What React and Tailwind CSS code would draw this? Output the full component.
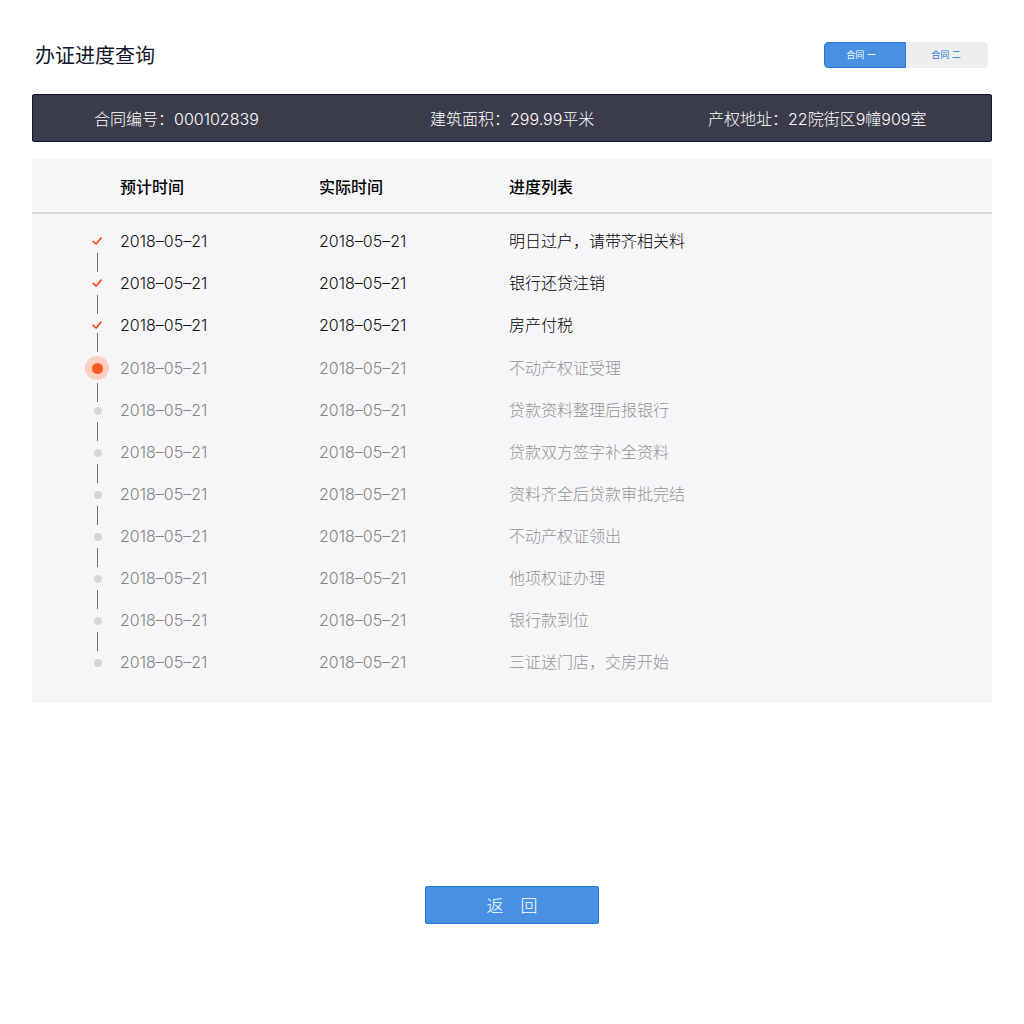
import { useState } from "react";
import clsx from "clsx";

const CONTRACTS = ["合同 一", "合同 二"];

const INFO = [
  { label: "合同编号", value: "000102839" },
  { label: "建筑面积", value: "299.99平米" },
  { label: "产权地址", value: "22院街区9幢909室" },
];

const STEPS = [
  { title: "明日过户，请带齐相关料", status: "done" },
  { title: "银行还贷注销", status: "done" },
  { title: "房产付税", status: "done" },
  { title: "不动产权证受理", status: "current" },
  { title: "贷款资料整理后报银行", status: "pending" },
  { title: "贷款双方签字补全资料", status: "pending" },
  { title: "资料齐全后贷款审批完结", status: "pending" },
  { title: "不动产权证领出", status: "pending" },
  { title: "他项权证办理", status: "pending" },
  { title: "银行款到位", status: "pending" },
  { title: "三证送门店，交房开始", status: "pending" },
].map((step) => ({ planned: "2018–05–21", actual: "2018–05–21", ...step }));

function Marker({ status }) {
  if (status === "done") {
    return (
      <svg viewBox="0 0 10 8" className="h-2 w-2.5" fill="none" stroke="#ff4a14" strokeWidth="1.6">
        <path d="M0.6 3.8 4.2 7 9.4 0.6" />
      </svg>
    );
  }
  if (status === "current") {
    return (
      <span className="flex size-6 items-center justify-center rounded-full bg-[#ffcfc1]">
        <span className="size-[11px] rounded-full bg-[#ff5a1f]" />
      </span>
    );
  }
  return <span className="mt-0.5 ml-px size-2 rounded-full bg-[#d6d6d6]" />;
}

function StepRow({ step, next }) {
  const beforeCurrent = next?.status === "current";
  const done = step.status === "done";

  return (
    <tr className={clsx("align-top", done ? "text-[#111111]" : "text-[#858585]")}>
      <td className="p-0 pl-[53px]">
        <div className={clsx("flex w-6 flex-col items-center", beforeCurrent ? "h-[43px]" : next ? "h-[42px]" : "h-6")}>
          <span className="flex h-6 shrink-0 items-center justify-center">
            <Marker status={step.status} />
          </span>
          {next ? (
            <span
              className={clsx(
                "h-[19px] w-px shrink-0 bg-[#6e6e6e]",
                beforeCurrent && "-mt-1",
                step.status === "current" && "mt-[3px]",
              )}
            />
          ) : null}
        </div>
      </td>
      <td className="p-0">{step.planned}</td>
      <td className="p-0">{step.actual}</td>
      <td className={clsx("p-0", done ? "text-black" : "text-[#949494]")}>{step.title}</td>
    </tr>
  );
}

export default function App() {
  const [active, setActive] = useState(0);

  return (
    <main className="min-h-screen bg-white px-8 pt-[42px] pb-[100px] font-['Inter','Noto_Sans_CJK_SC',sans-serif] font-light">
      <header className="flex items-center justify-between pr-1 pl-[3px]">
        <h1 className="pt-0.5 text-[20px] leading-6 font-normal text-[#12152b]">办证进度查询</h1>
        <div className="flex overflow-hidden rounded-[4px]">
          {CONTRACTS.map((name, index) => (
            <button
              key={name}
              type="button"
              onClick={() => setActive(index)}
              className={clsx(
                "h-[26px] w-[82px] border pr-2 text-[9px] font-normal first:rounded-l-[4px] last:rounded-r-[4px] last:pr-0.5",
                active === index
                  ? "border-[#2378dd] bg-[#4990e2] text-white"
                  : "border-[#ededed] bg-[#eeeeee] text-[#2378dd]",
              )}
            >
              {name}
            </button>
          ))}
        </div>
      </header>

      <dl className="mt-[26px] grid h-12 grid-cols-[336fr_278fr_283fr] items-center rounded-[2px] border border-[#12152b] bg-[#3a3c4c] pt-0.5 pl-[61px] text-base text-white">
        {INFO.map((item) => (
          <div key={item.label} className="flex">
            <dt>{item.label}：</dt>
            <dd>{item.value}</dd>
          </div>
        ))}
      </dl>

      <section className="mt-[17px] rounded-[4px] bg-[#f6f6f9] pb-[29px]">
        <table className="w-full table-fixed border-collapse text-left text-base leading-6">
          <colgroup>
            <col className="w-[88px]" />
            <col className="w-[199px]" />
            <col className="w-[190px]" />
            <col />
          </colgroup>
          <thead>
            <tr className="h-[54px] border-b-2 border-[#d9d9dc] text-black">
              <td className="p-0" />
              <th className="p-0 pt-[3px] font-medium">预计时间</th>
              <th className="p-0 pt-[3px] font-medium">实际时间</th>
              <th className="p-0 pt-[3px] font-medium">进度列表</th>
            </tr>
          </thead>
          <tbody className="before:block before:h-[15px]">
            {STEPS.map((step, index) => (
              <StepRow key={step.title} step={step} next={STEPS[index + 1]} />
            ))}
          </tbody>
        </table>
      </section>

      <div className="mt-[183px] flex justify-center">
        <button
          type="button"
          className="h-[38px] w-[174px] rounded-[2px] border border-[#2378dd] bg-[#4990e2] pt-1 text-[17px] text-white"
        >
          返&emsp;回
        </button>
      </div>
    </main>
  );
}
